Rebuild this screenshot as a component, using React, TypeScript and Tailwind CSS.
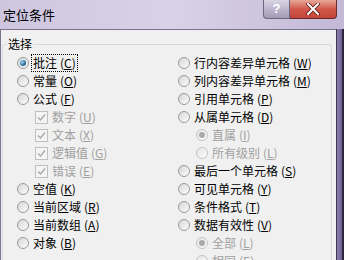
import React from "react";

type Opt = { label: string; k: string; kind: "radio" | "check" | "sub"; checked?: boolean; disabled?: boolean; focus?: boolean };

const left: Opt[] = [
  { label: "批注", k: "C", kind: "radio", checked: true, focus: true },
  { label: "常量", k: "O", kind: "radio" },
  { label: "公式", k: "F", kind: "radio" },
  { label: "数字", k: "U", kind: "check", checked: true, disabled: true },
  { label: "文本", k: "X", kind: "check", checked: true, disabled: true },
  { label: "逻辑值", k: "G", kind: "check", checked: true, disabled: true },
  { label: "错误", k: "E", kind: "check", checked: true, disabled: true },
  { label: "空值", k: "K", kind: "radio" },
  { label: "当前区域", k: "R", kind: "radio" },
  { label: "当前数组", k: "A", kind: "radio" },
  { label: "对象", k: "B", kind: "radio" },
];

const right: Opt[] = [
  { label: "行内容差异单元格", k: "W", kind: "radio" },
  { label: "列内容差异单元格", k: "M", kind: "radio" },
  { label: "引用单元格", k: "P", kind: "radio" },
  { label: "从属单元格", k: "D", kind: "radio" },
  { label: "直属", k: "I", kind: "sub", checked: true, disabled: true },
  { label: "所有级别", k: "L", kind: "sub", disabled: true },
  { label: "最后一个单元格", k: "S", kind: "radio" },
  { label: "可见单元格", k: "Y", kind: "radio" },
  { label: "条件格式", k: "T", kind: "radio" },
  { label: "数据有效性", k: "V", kind: "radio" },
  { label: "全部", k: "L", kind: "sub", checked: true, disabled: true },
  { label: "相同", k: "E", kind: "sub", disabled: true },
];

const Radio = ({ checked, disabled }: { checked?: boolean; disabled?: boolean }) => (
  <span
    className={
      disabled
        ? "w-[12px] h-[12px] rounded-full border border-[#c4c4c4] bg-gradient-to-br from-[#e6e6e6] to-[#fbfbfb] flex items-center justify-center shrink-0"
        : "w-[12px] h-[12px] rounded-full border border-[#9a9a9a] bg-gradient-to-br from-[#d6d6d6] to-[#fdfdfd] flex items-center justify-center shrink-0"
    }
  >
    {checked &&
      (disabled ? (
        <span className="w-[6px] h-[6px] rounded-full bg-[#a9a9a9]" />
      ) : (
        <span className="w-[6px] h-[6px] rounded-full bg-[radial-gradient(circle_at_35%_35%,#9ad8f4,#2a6a9a_60%,#163e60)]" />
      ))}
  </span>
);

const Check = () => (
  <span className="w-[13px] h-[13px] border border-[#c0c0c0] bg-[#f4f4f4] flex items-center justify-center shrink-0">
    <svg width="9" height="9" viewBox="0 0 9 9">
      <path d="M1 4.5 L3.5 7 L8 1.5" fill="none" stroke="#a8a8a8" strokeWidth="1.4" />
    </svg>
  </span>
);

const Row = ({ o }: { o: Opt }) => (
  <div className={o.kind === "radio" ? "h-[18px] flex items-center gap-[4px]" : "h-[18px] flex items-center gap-[4px] ml-[18px]"}>
    {o.kind === "check" ? <Check /> : <Radio checked={o.checked} disabled={o.disabled} />}
    <span
      className={
        (o.disabled ? "text-[#a0a0a0] " : "text-black ") +
        (o.focus ? "outline-1 outline-dotted outline-black px-[1px] -ml-[1px] leading-[16px]" : "leading-[16px]")
      }
    >
      {o.label}
      <span className="ml-[3px]">
        (<span className="underline">{o.k}</span>)
      </span>
    </span>
  </div>
);

export default function App() {
  return (
    <div className="w-[344px] h-[260px] overflow-hidden relative flex flex-col bg-gradient-to-b from-[#c6bcd8] to-[#b9aed0] font-['Noto_Sans_CJK_SC',sans-serif] text-[12px]">
      {/* title */}
      <div className="h-[29px] shrink-0 flex items-center pl-[3px] text-[13px] text-black bg-gradient-to-r from-[#cec6df] via-[#d9d2e6] to-[#c3b8d6]">
        定位条件
      </div>
      <div className="absolute top-0 right-[7px] flex">
        <div className="w-[27px] h-[19px] rounded-bl-[4px] border border-t-0 border-[#6d6585] bg-gradient-to-b from-[#d8d4e2] to-[#a29bb6] flex items-center justify-center text-white font-bold text-[13px] font-['Liberation_Sans',sans-serif]">
          ?
        </div>
        <div className="w-[47px] h-[19px] rounded-br-[4px] border border-t-0 border-l-0 border-[#6a2b2b] bg-gradient-to-b from-[#e8a89a] via-[#d0574a] to-[#c4453a] flex items-center justify-center">
          <svg width="14" height="12" viewBox="0 0 14 12">
            <path d="M2 1 L12 11 M12 1 L2 11" stroke="#5a1c18" strokeWidth="3.6" strokeLinecap="round" />
            <path d="M2 1 L12 11 M12 1 L2 11" stroke="#ffffff" strokeWidth="2" strokeLinecap="round" />
          </svg>
        </div>
      </div>
      {/* body */}
      <div className="flex flex-1 min-h-0">
        <div className="w-[336px] bg-[#f0f0f0] border-l border-t border-[#7a7290] pt-[6px] pl-[1px] pr-[4px]">
          <fieldset className="border border-[#d5d9de] rounded-[3px] h-[260px] pt-[2px]">
            <legend className="ml-[4px] px-[1px] leading-[16px] text-[12px] text-black">选择</legend>
            <div className="flex">
              <div className="w-[175px] pl-[14px] flex flex-col">
                {left.map((o, i) => (
                  <Row key={i} o={o} />
                ))}
              </div>
              <div className="flex-1 flex flex-col">
                {right.map((o, i) => (
                  <Row key={i} o={o} />
                ))}
              </div>
            </div>
          </fieldset>
        </div>
        <div className="w-[8px] flex">
          <div className="w-[1px] bg-[#3e3452]" />
          <div className="w-[5px] bg-gradient-to-r from-[#8a80ac] to-[#6d6290]" />
          <div className="w-[2px] bg-[#2e2640]" />
        </div>
      </div>
    </div>
  );
}
